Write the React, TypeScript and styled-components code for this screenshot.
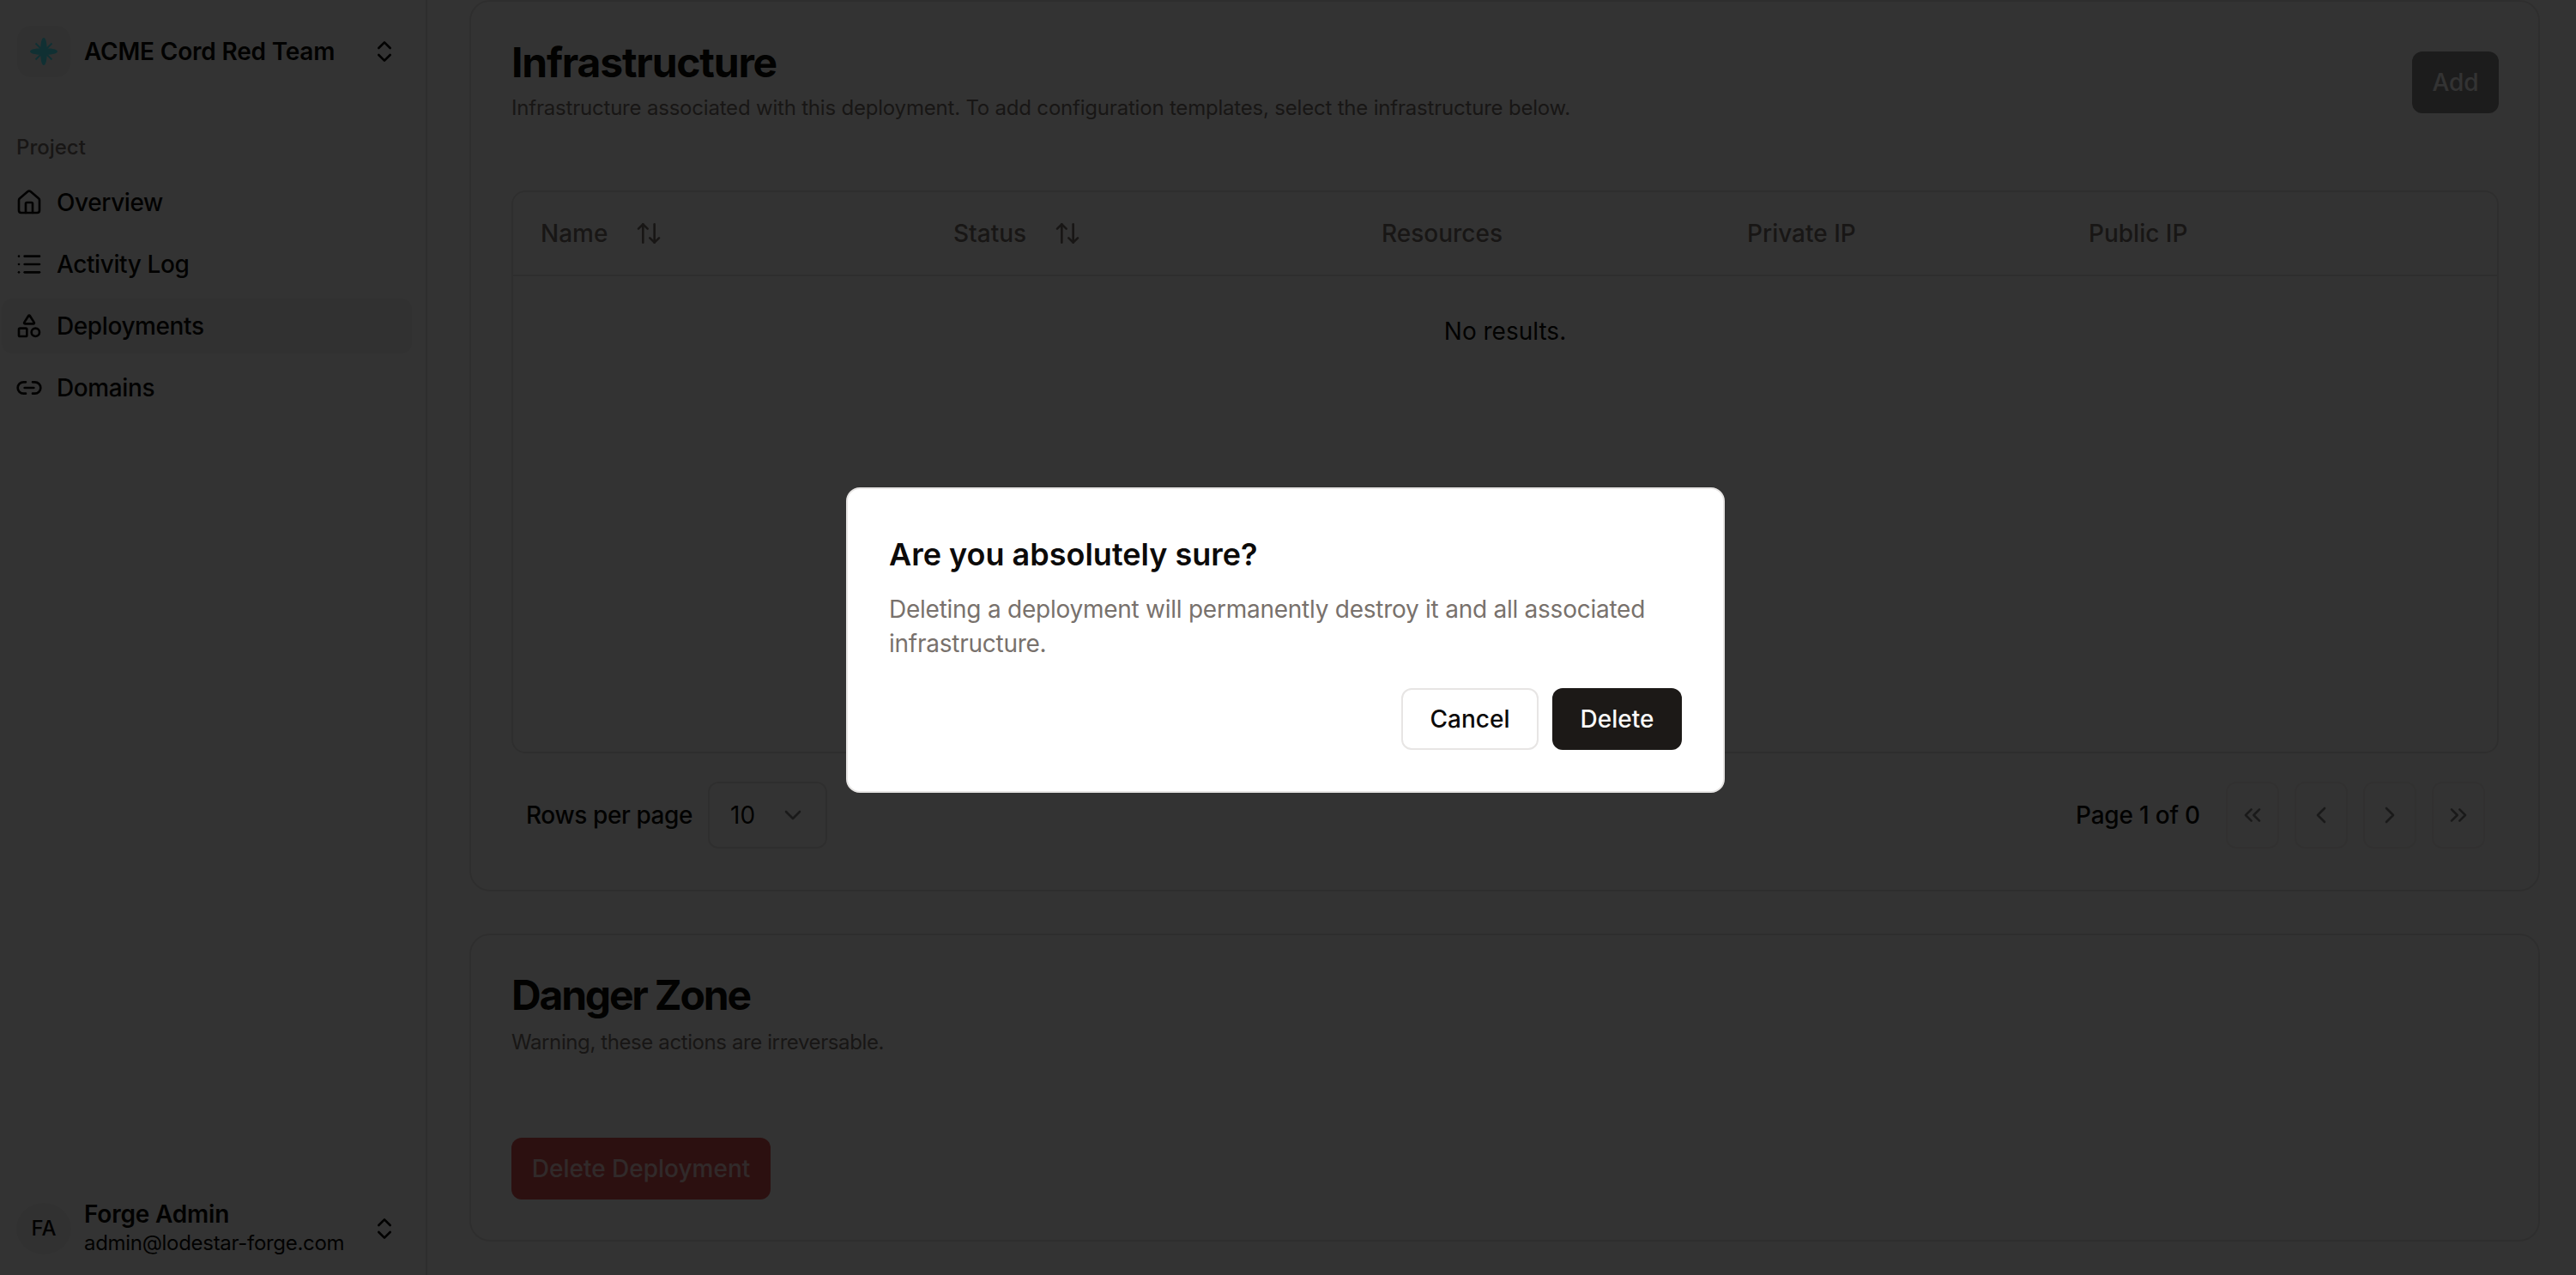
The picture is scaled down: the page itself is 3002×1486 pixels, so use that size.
import React from 'react';
import styled, { createGlobalStyle } from 'styled-components';
import {
    ArrowUpDown,
    ChevronDown,
    ChevronLeft,
    ChevronRight,
    ChevronsLeft,
    ChevronsRight,
    ChevronsUpDown,
    House,
    Link2,
    List,
    Shapes,
} from 'lucide-react';

const GlobalStyle = createGlobalStyle`
    html, body {
        margin: 0;
        height: 100%;
        background: #fff;
        overflow: hidden;
    }
    * {
        box-sizing: border-box;
    }
    body {
        font-family: Inter, "Liberation Sans", sans-serif;
        color: #0c0a09;
    }
`

const navItems = [
    { label: 'Overview', icon: House },
    { label: 'Activity Log', icon: List },
    { label: 'Deployments', icon: Shapes, active: true },
    { label: 'Domains', icon: Link2 },
]

const columns = [
    { label: 'Name', width: 481, sortable: true },
    { label: 'Status', width: 499, sortable: true },
    { label: 'Resources', width: 426 },
    { label: 'Private IP', width: 398 },
    { label: 'Public IP', width: 0 },
]

const pagerIcons = [ChevronsLeft, ChevronLeft, ChevronRight, ChevronsRight]

const LogoMark = () => (
    <svg width="32" height="32" viewBox="0 0 32 32" fill="#50f0ff">
        <path d="M16 0c2.500 0 3.500 6 3.800 12.200C26 12.500 32 13.500 32 16s-6 3.500-12.200 3.800C19.500 26 18.500 32 16 32s-3.500-6-3.800-12.200C6 19.500 0 18.500 0 16s6-3.500 12.200-3.800C12.500 6 13.500 0 16 0z" />
        <path d="M6.500 6.500l19 19M25.500 6.500l-19 19" stroke="#50f0ff" strokeWidth="2" />
    </svg>
)

export default function App() {
    return (
        <Shell>
            <GlobalStyle />
            <Sidebar>
                <OrgSwitcher>
                    <LogoBox><LogoMark /></LogoBox>
                    <OrgName>ACME Cord Red Team</OrgName>
                    <ChevronsUpDown size={32} />
                </OrgSwitcher>
                <SectionLabel>Project</SectionLabel>
                <Nav>
                    {navItems.map(({ label, icon: Icon, active }) => (
                        <NavItem key={label} $active={active}>
                            <Icon size={32} />
                            {label}
                        </NavItem>
                    ))}
                </Nav>
                <UserRow>
                    <Avatar>FA</Avatar>
                    <UserText>
                        <UserName>Forge Admin</UserName>
                        <UserEmail>admin@lodestar-forge.com</UserEmail>
                    </UserText>
                    <ChevronsUpDown size={32} />
                </UserRow>
            </Sidebar>

            <Main>
                <Card>
                    <CardHeader>
                        <div>
                            <CardTitle>Infrastructure</CardTitle>
                            <CardSubtitle>Infrastructure associated with this deployment. To add configuration templates, select the infrastructure below.</CardSubtitle>
                        </div>
                        <AddButton>Add</AddButton>
                    </CardHeader>
                    <TableBox>
                        <TableHead>
                            {columns.map(col => (
                                <HeadCell key={col.label} $width={col.width}>
                                    {col.label}
                                    {col.sortable && <ArrowUpDown size={32} />}
                                </HeadCell>
                            ))}
                        </TableHead>
                        <EmptyRow>No results.</EmptyRow>
                    </TableBox>
                    <Pagination>
                        <RowsGroup>
                            <RowsLabel>Rows per page</RowsLabel>
                            <RowsSelect>
                                10
                                <ChevronDown size={32} />
                            </RowsSelect>
                        </RowsGroup>
                        <PagerGroup>
                            <PageLabel>Page 1 of 0</PageLabel>
                            {pagerIcons.map((Icon, i) => (
                                <PagerButton key={i}><Icon size={32} /></PagerButton>
                            ))}
                        </PagerGroup>
                    </Pagination>
                </Card>

                <DangerCard>
                    <DangerTitle>Danger Zone</DangerTitle>
                    <DangerSubtitle>Warning, these actions are irreversable.</DangerSubtitle>
                    <DangerButton>Delete Deployment</DangerButton>
                </DangerCard>
            </Main>

            <Overlay>
                <Dialog>
                    <DialogTitle>Are you absolutely sure?</DialogTitle>
                    <DialogText>Deleting a deployment will permanently destroy it and all associated infrastructure.</DialogText>
                    <DialogActions>
                        <CancelButton>Cancel</CancelButton>
                        <ConfirmButton>Delete</ConfirmButton>
                    </DialogActions>
                </Dialog>
            </Overlay>
        </Shell>
    )
}

const Shell = styled.div`
    display: flex;
    width: 100%;
    height: 100vh;
    overflow: hidden;
`

const Sidebar = styled.aside`
    width: 498px;
    flex-shrink: 0;
    display: flex;
    flex-direction: column;
    padding: 30px 16px 21px 2px;
    border-right: 2px solid #e7e5e4;
`

const OrgSwitcher = styled.div`
    display: flex;
    align-items: center;
    height: 60px;
    padding: 0 16px 0 18px;
    > svg {
        margin-left: auto;
    }
`

const LogoBox = styled.div`
    width: 62px;
    height: 60px;
    flex-shrink: 0;
    display: flex;
    align-items: center;
    justify-content: center;
    border-radius: 16px;
    background: #f5f5f4;
    margin-right: 16px;
`

const OrgName = styled.span`
    font-size: 28px;
    font-weight: 600;
    letter-spacing: -0.2px;
`

const SectionLabel = styled.div`
    margin: 64px 0 14px 17px;
    font-size: 24px;
    line-height: 36px;
    font-weight: 500;
    color: #78716c;
`

const Nav = styled.nav`
    display: flex;
    flex-direction: column;
    gap: 8px;
`

const NavItem = styled.div<{ $active?: boolean }>`
    display: flex;
    align-items: center;
    gap: 16px;
    height: 64px;
    padding-left: 16px;
    border-radius: 12px;
    font-size: 28px;
    font-weight: 500;
    letter-spacing: -0.4px;
    background: ${props => props.$active ? '#f5f5f4' : 'transparent'};
`

const UserRow = styled.div`
    display: flex;
    align-items: center;
    margin-top: auto;
    padding: 0 16px 0 17px;
    > svg {
        margin-left: auto;
    }
`

const Avatar = styled.div`
    width: 64px;
    height: 60px;
    flex-shrink: 0;
    display: flex;
    align-items: center;
    justify-content: center;
    margin-right: 15px;
    border-radius: 50%;
    background: #f5f5f4;
    font-size: 24px;
    font-weight: 500;
`

const UserText = styled.div`
    display: flex;
    flex-direction: column;
    gap: 1px;
`

const UserName = styled.span`
    font-size: 28px;
    line-height: 34px;
    font-weight: 600;
    letter-spacing: -0.2px;
`

const UserEmail = styled.span`
    font-size: 24px;
    line-height: 32px;
    letter-spacing: -0.3px;
`

const Main = styled.main`
    flex: 1;
    min-width: 0;
    padding: 0 42px 0 49px;
    display: flex;
    flex-direction: column;
    gap: 49px;
`

const Card = styled.section`
    border: 2px solid #e7e5e4;
    border-radius: 24px;
    padding: 43px 46px 0 47px;
    height: 1039px;
    flex-shrink: 0;
`

const DangerCard = styled(Card)`
    height: 359px;
    padding-top: 42px;
`

const CardHeader = styled.div`
    display: flex;
    justify-content: space-between;
    align-items: flex-start;
    height: 177px;
`

const CardTitle = styled.h2`
    margin: 0;
    font-size: 48px;
    line-height: 56px;
    font-weight: 700;
    letter-spacing: -1.2px;
`

const DangerTitle = styled(CardTitle)`
    letter-spacing: -2.2px;
`

const CardSubtitle = styled.p`
    margin: 9px 0 0;
    font-size: 24px;
    line-height: 32px;
    color: #78716c;
    letter-spacing: -0.2px;
`

const DangerSubtitle = styled(CardSubtitle)`
    margin-top: 11px;
    letter-spacing: -0.4px;
`

const BaseButton = styled.div`
    display: inline-flex;
    align-items: center;
    justify-content: center;
    height: 72px;
    border-radius: 12px;
    font-size: 28px;
    font-weight: 500;
`

const AddButton = styled(BaseButton)`
    width: 101px;
    margin: 15px 0 0;
    background: #1c1917;
    color: #fff;
    opacity: 0.5;
`

const TableBox = styled.div`
    height: 656px;
    border: 2px solid #e7e5e4;
    border-radius: 16px;
`

const TableHead = styled.div`
    display: flex;
    align-items: center;
    height: 98px;
    padding-left: 32px;
    border-bottom: 2px solid #e7e5e4;
`

const HeadCell = styled.div<{ $width: number }>`
    display: flex;
    align-items: center;
    gap: 32px;
    flex: ${props => props.$width ? `0 0 ${props.$width}px` : '1'};
    font-size: 28px;
    font-weight: 500;
    color: #78716c;
`

const EmptyRow = styled.div`
    padding-top: 44px;
    text-align: center;
    font-size: 28px;
    line-height: 40px;
`

const Pagination = styled.div`
    display: flex;
    align-items: center;
    justify-content: space-between;
    padding: 33px 16px 0 17px;
`

const RowsGroup = styled.div`
    display: flex;
    align-items: center;
    gap: 18px;
`

const FooterText = styled.span`
    font-size: 28px;
    font-weight: 500;
    letter-spacing: -0.2px;
`

const RowsLabel = styled(FooterText)`
    letter-spacing: -0.4px;
`

const RowsSelect = styled.div`
    display: flex;
    align-items: center;
    justify-content: space-between;
    width: 139px;
    height: 78px;
    padding: 0 22px 0 24px;
    border: 2px solid #e7e5e4;
    border-radius: 12px;
    font-size: 28px;
    svg {
        opacity: 0.5;
    }
`

const PagerGroup = styled.div`
    display: flex;
    align-items: center;
    gap: 18px;
`

const PageLabel = styled(FooterText)`
    margin-right: 12px;
`

const PagerButton = styled.div`
    display: flex;
    align-items: center;
    justify-content: center;
    width: 62px;
    height: 78px;
    border: 2px solid #e7e5e4;
    border-radius: 12px;
    opacity: 0.5;
`

const DangerButton = styled(BaseButton)`
    width: 302px;
    margin-top: 95px;
    background: #dc5050;
    color: rgba(255, 255, 255, 0.75);
`

const Overlay = styled.div`
    position: fixed;
    inset: 0;
    z-index: 10;
    display: flex;
    align-items: flex-start;
    justify-content: center;
    padding: 568px 6px 0 0;
    background: rgba(0, 0, 0, 0.8);
`

const Dialog = styled.div`
    width: 1024px;
    height: 356px;
    padding: 48px;
    background: #fff;
    border: 2px solid #e7e5e4;
    border-radius: 16px;
`

const DialogTitle = styled.h3`
    margin: 0;
    font-size: 36px;
    line-height: 56px;
    font-weight: 600;
`

const DialogText = styled.p`
    margin: 16px 0 0;
    font-size: 28px;
    line-height: 40px;
    color: #78716c;
    letter-spacing: -0.25px;
`

const DialogActions = styled.div`
    display: flex;
    justify-content: flex-end;
    gap: 16px;
    margin-top: 32px;
`

const CancelButton = styled(BaseButton)`
    width: 160px;
    border: 2px solid #e7e5e4;
    background: #fff;
`

const ConfirmButton = styled(BaseButton)`
    width: 151px;
    background: #1c1917;
    color: #fafaf9;
`
